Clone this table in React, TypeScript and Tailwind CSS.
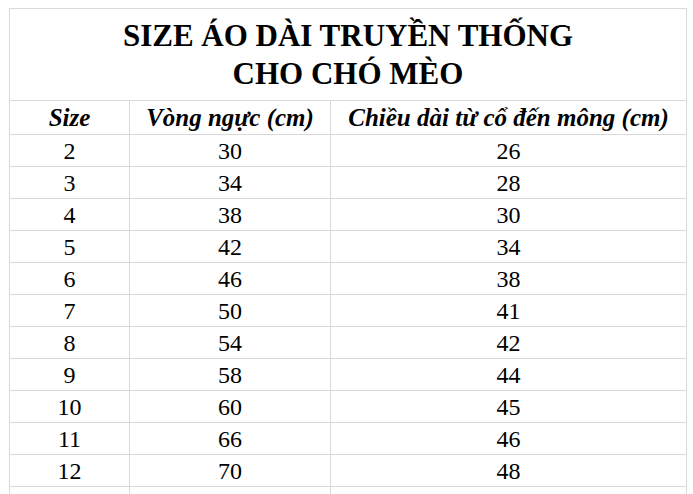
import React from 'react';

const rows = [
  [2, 30, 26],
  [3, 34, 28],
  [4, 38, 30],
  [5, 42, 34],
  [6, 46, 38],
  [7, 50, 41],
  [8, 54, 42],
  [9, 58, 44],
  [10, 60, 45],
  [11, 66, 46],
  [12, 70, 48],
];

const cell = "border border-[#d9d9d9] text-center align-middle p-0 font-['Liberation_Serif',serif]";

export default function App() {
  return (
    <div className="h-[494px] w-[693px] overflow-hidden bg-white pt-[8px] pl-[9px] text-black font-['Liberation_Serif',serif]">
      <table className="w-[677px] table-fixed border-collapse">
        <colgroup>
          <col className="w-[120px]" />
          <col className="w-[201px]" />
          <col className="w-[356px]" />
        </colgroup>
        <tbody>
          <tr className="h-[92px]">
            <td colSpan={3} className={`${cell} text-[31px] font-bold leading-[38px]`}>
              SIZE ÁO DÀI TRUYỀN THỐNG
              <br />
              CHO CHÓ MÈO
            </td>
          </tr>
          <tr className="h-[34px]">
            <td className={`${cell} text-[25px] font-bold italic leading-none`}>Size</td>
            <td className={`${cell} text-[25px] font-bold italic leading-none`}>Vòng ngực (cm)</td>
            <td className={`${cell} text-[25px] font-bold italic leading-none`}>Chiều dài từ cổ đến mông (cm)</td>
          </tr>
          {rows.map(([size, chest, length]) => (
            <tr key={size} className="h-[32px]">
              <td className={`${cell} text-[24px] leading-none`}>{size}</td>
              <td className={`${cell} text-[24px] leading-none`}>{chest}</td>
              <td className={`${cell} text-[24px] leading-none`}>{length}</td>
            </tr>
          ))}
          <tr className="h-[32px]">
            <td className={cell}></td>
            <td className={cell}></td>
            <td className={cell}></td>
          </tr>
        </tbody>
      </table>
    </div>
  );
}
